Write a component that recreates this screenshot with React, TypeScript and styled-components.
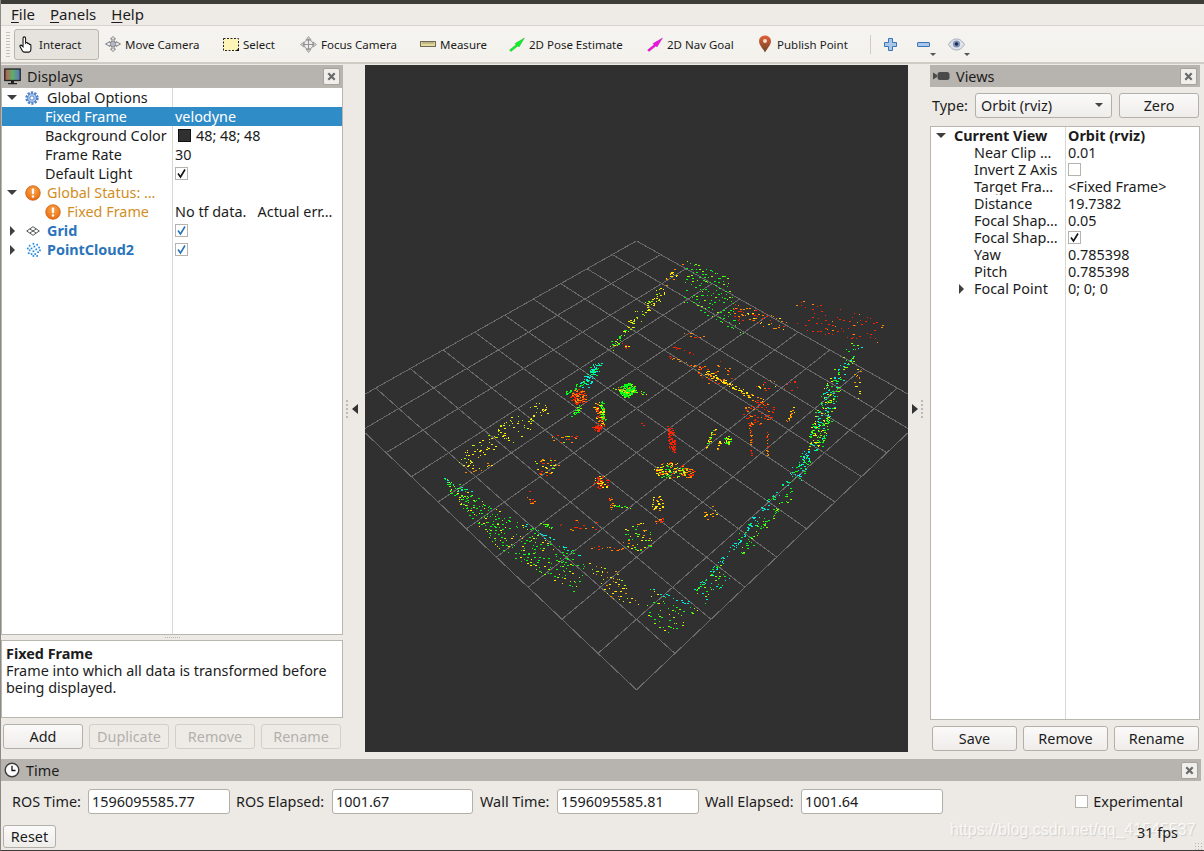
import React, { useMemo } from "react";
import styled, { createGlobalStyle } from "styled-components";

const Global = createGlobalStyle`
  html, body { margin: 0; padding: 0; background: #edeae5; }
  #root { width: 1204px; height: 851px; overflow: hidden; }
  * { box-sizing: border-box; }
`;

const Win = styled.div`
  position: relative;
  width: 1204px;
  height: 851px;
  display: flex;
  flex-direction: column;
  background: #edeae5;
  border-left: 1px solid #8d8a85;
  border-bottom: 1px solid #3c3b37;
  font-family: "Noto Sans", "Open Sans", sans-serif;
  font-size: 14.4px;
  color: #1c1c1c;
  overflow: hidden;
`;
const TopEdge = styled.div`
  height: 4px;
  flex: none;
  background: #3e3d38;
  margin-left: -1px;
`;
const MenuBar = styled.div`
  height: 22px;
  flex: none;
  display: flex;
  align-items: center;
  gap: 15px;
  padding: 0 0 2px 10px;
  background: #eeebe6;
  border-bottom: 1px solid #d9d6d1;
  font-size: 15px;
`;
const MenuItem = styled.span`
  u { text-underline-offset: 2px; }
`;
const ToolBar = styled.div`
  height: 38px;
  flex: none;
  display: flex;
  align-items: center;
  padding-left: 5px;
  background: linear-gradient(#f6f4f0, #f3f1ec);
  border-bottom: 2px solid #cfccc6;
`;
const Grip = styled.div`
  width: 4px;
  height: 26px;
  margin-right: 4px;
  background-image: radial-gradient(circle, #c4c1bb 0.7px, transparent 0.8px);
  background-size: 2px 3px;
`;
const ToolBtn = styled.div<{ $w: number; $active?: boolean }>`
  width: ${(p) => p.$w}px;
  height: 31px;
  flex: none;
  display: flex;
  align-items: center;
  gap: ${(p) => (p.$active ? 3 : 4)}px;
  padding-left: ${(p) => (p.$active ? 4 : 5)}px;
  font-size: 11.5px;
  white-space: nowrap;
  border-radius: 3px;
  ${(p) =>
    p.$active
      ? "background:#e6e3de;border:1px solid #b9b6b0;"
      : "border:1px solid transparent;"}
`;
const Sep = styled.div`
  width: 1px;
  height: 19px;
  margin: 0 13px 0 4px;
  background: #d0cdc8;
`;
const ToolIcon = styled.div<{ $w: number }>`
  position: relative;
  width: ${(p) => p.$w}px;
  height: 20px;
  flex: none;
  display: flex;
  align-items: center;
`;
const Drop = styled.span<{ $r: number }>`
  position: absolute;
  right: ${(p) => p.$r}px;
  bottom: -2px;
  width: 0;
  height: 0;
  border-left: 3px solid transparent;
  border-right: 3px solid transparent;
  border-top: 3px solid #555;
`;
const Main = styled.div`
  flex: none;
  height: 687px;
  margin-top: 1px;
  display: flex;
`;
const LeftDock = styled.div`
  width: 342px;
  flex: none;
  display: flex;
  flex-direction: column;
`;
const RightDock = styled.div`
  width: 270px;
  flex: none;
  display: flex;
  flex-direction: column;
`;
const DockHead = styled.div`
  height: 22px;
  flex: none;
  display: flex;
  align-items: center;
  gap: 6px;
  padding: 0 3px 0 3px;
  background: #b7b3ae;
`;
const DockTitle = styled.span`
  flex: 1;
`;
const CloseBtn = styled.div`
  width: 17px;
  height: 17px;
  display: flex;
  align-items: center;
  justify-content: center;
  background: #f1efec;
  border: 1px solid #a5a29c;
  border-radius: 2px;
`;
const Tree = styled.div<{ $w: number }>`
  flex: 1;
  min-height: 0;
  background: #fff;
  border: 1px solid #b9b6b0;
  background-image: linear-gradient(#d9d7d3, #d9d7d3);
  background-size: 1px 100%;
  background-repeat: no-repeat;
  background-position: ${(p) => p.$w}px 0;
`;
const Row = styled.div<{ $h: number; $sel?: boolean; $w: number }>`
  height: ${(p) => p.$h}px;
  display: grid;
  grid-template-columns: ${(p) => p.$w}px 1fr;
  align-items: center;
  white-space: nowrap;
  ${(p) => (p.$sel ? "background:#308cc6;color:#fff;" : "")}
`;
const NameCell = styled.div<{ $pad: number; $tone?: "warn" | "link"; $bold?: boolean }>`
  display: flex;
  align-items: center;
  padding-left: ${(p) => p.$pad}px;
  height: 100%;
  overflow: hidden;
  color: ${(p) => (p.$tone === "warn" ? "#d18e1f" : p.$tone === "link" ? "#2a74b9" : "inherit")};
  font-weight: ${(p) => (p.$bold || p.$tone === "link" ? 700 : 400)};
`;
const ValueCell = styled.div<{ $bold?: boolean }>`
  display: flex;
  align-items: center;
  padding-left: 3px;
  height: 100%;
  overflow: hidden;
  font-weight: ${(p) => (p.$bold ? 700 : 400)};
`;
const Arrow = styled.span<{ $open?: boolean }>`
  flex: none;
  width: 0;
  height: 0;
  ${(p) =>
    p.$open
      ? "border-left:5px solid transparent;border-right:5px solid transparent;border-top:5px solid #3f3f3f;"
      : "border-top:5px solid transparent;border-bottom:5px solid transparent;border-left:5px solid #3f3f3f;"}
`;
const IconSlot = styled.span<{ $l: number; $w: number }>`
  flex: none;
  display: flex;
  margin-left: ${(p) => p.$l}px;
  width: ${(p) => p.$w}px;
`;
const Check = styled.span`
  width: 13px;
  height: 13px;
  flex: none;
  border: 1px solid #b5b3ae;
  background: #fff;
  display: flex;
  align-items: center;
  justify-content: center;
`;
const Swatch = styled.span`
  width: 13px;
  height: 13px;
  margin: 0 5px 0 3px;
  background: #303030;
  border: 1px solid #111;
`;
const SplitH = styled.div`
  height: 5px;
  flex: none;
  display: flex;
  justify-content: center;
  align-items: center;
  gap: 1px;
  i { width: 1px; height: 1px; background: #b8b5af; }
`;
const Desc = styled.div`
  height: 78px;
  flex: none;
  background: #fff;
  border: 1px solid #b9b6b0;
  padding: 4px 4px;
  line-height: 17px;
  b { display: block; font-weight: 700; }
`;
const BtnRow = styled.div<{ $pad: string; $gap: number; $top: number }>`
  display: flex;
  gap: ${(p) => p.$gap}px;
  padding: ${(p) => p.$pad};
  margin-top: ${(p) => p.$top}px;
`;
const Btn = styled.div<{ $w: number; $h: number; $off?: boolean }>`
  width: ${(p) => p.$w}px;
  height: ${(p) => p.$h}px;
  flex: none;
  display: flex;
  align-items: center;
  justify-content: center;
  border-radius: 3px;
  border: 1px solid ${(p) => (p.$off ? "#d2cfca" : "#b3b0aa")};
  color: ${(p) => (p.$off ? "#b2b0ac" : "inherit")};
  background: ${(p) => (p.$off ? "#eeebe7" : "linear-gradient(#fbfafa, #efedea)")};
`;
const Split = styled.div`
  width: 22px;
  flex: none;
  display: flex;
  align-items: center;
`;
const SplitDots = styled.div`
  width: 2px;
  height: 20px;
  margin-left: 3px;
  background-image: radial-gradient(circle, #bdbab4 0.8px, transparent 0.9px);
  background-size: 2px 4px;
`;
const SplitArrow = styled.span<{ $dir: "l" | "r" }>`
  width: 0;
  height: 0;
  margin-left: 4px;
  border-top: 5px solid transparent;
  border-bottom: 5px solid transparent;
  ${(p) => (p.$dir === "l" ? "border-right:6px solid #333;" : "border-left:6px solid #333;")}
`;
const Canvas = styled.div`
  width: 543px;
  flex: none;
  height: 687px;
  background: #303030;
  overflow: hidden;
  svg { display: block; }
`;
const TypeRow = styled.div`
  height: 39px;
  flex: none;
  display: flex;
  align-items: center;
  padding: 0 1px 3px 2px;
`;
const TypeLabel = styled.span`
  width: 43px;
  flex: none;
`;
const Combo = styled.div`
  width: 137px;
  height: 25px;
  display: flex;
  align-items: center;
  justify-content: space-between;
  padding: 0 8px 0 5px;
  border: 1px solid #b3b0aa;
  border-radius: 3px;
  background: linear-gradient(#fbfafa, #efedea);
  margin-right: 7px;
  span:last-child {
    width: 0;
    height: 0;
    border-left: 4px solid transparent;
    border-right: 4px solid transparent;
    border-top: 4px solid #444;
  }
`;
const TimeDock = styled.div`
  margin-top: 7px;
  flex: 1;
  display: flex;
  flex-direction: column;
`;
const TimeHead = styled(DockHead)`
  margin-right: 3px;
`;
const TimeRow = styled.div`
  height: 40px;
  flex: none;
  display: flex;
  align-items: center;
  padding-left: 11px;
`;
const TimeLabel = styled.span<{ $w: number; $l?: number }>`
  width: ${(p) => p.$w}px;
  margin-left: ${(p) => p.$l || 0}px;
  flex: none;
  white-space: nowrap;
`;
const TimeInput = styled.div<{ $w: number }>`
  width: ${(p) => p.$w}px;
  height: 25px;
  flex: none;
  display: flex;
  align-items: center;
  padding-left: 3px;
  background: #fff;
  border: 1px solid #b3b0aa;
  border-radius: 3px;
`;
const Spacer = styled.div`
  flex: 1;
`;
const Experimental = styled.div`
  display: flex;
  align-items: center;
  gap: 5px;
  padding-right: 21px;
`;
const BottomRow = styled.div`
  display: flex;
  align-items: center;
  height: 23px;
  margin-top: 4px;
  padding-left: 2px;
`;
const Fps = styled.span`
  position: relative;
  z-index: 1;
  margin-right: 26px;
  margin-bottom: 9px;
`;
const Watermark = styled.div`
  position: absolute;
  left: 949px;
  top: 821px;
  font-family: "Liberation Sans", Arial, sans-serif;
  font-size: 16px;
  color: rgba(255, 255, 255, 0.8);
  white-space: nowrap;
  text-shadow: 1px 1px 1px rgba(170, 170, 170, 0.45);
`;
const SizeGrip = styled.div`
  position: absolute;
  right: 1px;
  bottom: 0;
  width: 9px;
  height: 8px;
  background-image: radial-gradient(circle, #b5b2ac 0.7px, transparent 0.8px);
  background-size: 3px 3px;
`;

/* ---------- icons ---------- */
const HandIcon = () => (
  <svg width="17" height="17" viewBox="0 0 16 16">
    <path
      d="M5 .8c.8 0 1.2.5 1.2 1.2V6.600l.3-.4c.8-.3 1.4 0 1.5.6l.1.3c.7-.4 1.4-.2 1.5.6l.1.3c.7-.3 1.5 0 1.5.8V12c0 1.800-1 3.200-2.500 3.200H5c-1 0-1.600-.8-2-1.600L1 10c-.4-.7 0-1.400.7-1.400.6 0 1 .4 1.500 1l.6.6V2C3.800 1.300 4.300.8 5 .8z"
      fill="#fff"
      stroke="#111"
      strokeWidth="1"
    />
  </svg>
);
const MoveIcon = () => (
  <svg width="16" height="16" viewBox="0 0 16 16">
    <path
      d="M8 .5 10.500 3H9v2.200L11 7V5.500L15.500 8 11 10.500V9L9 10.800V13h1.500L8 15.500 5.500 13H7v-2.200L5 9v1.500L.5 8 5 5.500V7l2-1.800V3H5.500z"
      fill="#e8e8ea"
      stroke="#77777a"
      strokeWidth=".9"
    />
    <circle cx="8" cy="8" r="2.600" fill="#b4bac4" stroke="#77777a" strokeWidth=".6" />
  </svg>
);
const SelectIcon = () => (
  <svg width="16" height="16" viewBox="0 0 16 16">
    <rect x=".5" y="2.500" width="15" height="12" fill="#fdf5b6" stroke="#222" strokeWidth="1" strokeDasharray="2 1.500" />
    <path d="M12.500 15H16v-3z" fill="#111" />
  </svg>
);
const FocusIcon = () => (
  <svg width="17" height="17" viewBox="0 0 17 17">
    <path d="M8.500.5 11 3.800H6zM8.500 16.500 6 13.200h5zM.5 8.500 3.800 6v5zM16.500 8.500 13.200 11V6z" fill="#cfcfcf" stroke="#8a8a8a" strokeWidth=".7" />
    <circle cx="8.500" cy="8.500" r="4.600" fill="#ececec" stroke="#8c8c8c" />
    <path d="M8.500 3v11M3 8.500h11" stroke="#8c8c8c" strokeWidth=".9" />
  </svg>
);
const RulerIcon = () => (
  <svg width="16" height="16" viewBox="0 0 16 16">
    <rect x=".5" y="5.500" width="15" height="5" fill="#e3d99a" stroke="#6f6a55" />
    <path d="M3 6v1.800M5 6v1.800M7 6v1.800M9 6v1.800M11 6v1.800M13 6v1.800" stroke="#6f6a55" strokeWidth=".7" />
  </svg>
);
const ArrowIcon = ({ c, d }: { c: string; d: string }) => (
  <svg width="16" height="16" viewBox="0 0 16 16">
    <path d="M.5 14 7 8.700 6 7.500 15.500 2 10 11 8.900 10 2 15.500z" fill={c} stroke={d} strokeWidth=".3" />
  </svg>
);
const PinIcon = () => (
  <svg width="16" height="18" viewBox="-1 0 16 18">
    <defs>
      <linearGradient id="pinG" x1="0" y1="0" x2="0" y2="1">
        <stop offset="0" stopColor="#e4603a" />
        <stop offset="1" stopColor="#6b4423" />
      </linearGradient>
    </defs>
    <path d="M7 .5C3.400.5 1 3 1 6.200 1 10 5 13.500 7 17.500c2-4 6-7.500 6-11.300C13 3 10.600.5 7 .5z" fill="url(#pinG)" />
    <circle cx="7" cy="6" r="2" fill="#f3e2c8" />
  </svg>
);
const PlusIcon = () => (
  <svg width="13" height="13" viewBox="0 0 13 13">
    <path d="M4.500.5h4v4h4v4h-4v4h-4v-4h-4v-4h4z" fill="#a8c6ea" stroke="#3d74b6" />
  </svg>
);
const MinusIcon = () => (
  <svg width="13" height="13" viewBox="0 0 13 13">
    <rect x=".5" y="4.500" width="12" height="4" rx=".5" fill="#a8c6ea" stroke="#3d74b6" />
  </svg>
);
const EyeIcon = () => (
  <svg width="17" height="13" viewBox="0 0 17 13">
    <path d="M.5 6.500C3 2.500 5.500 1 8.500 1s5.500 1.500 8 5.500c-2.500 4-5 5.500-8 5.500S3 10.500.5 6.500z" fill="#dfe3ea" stroke="#a4aab5" />
    <circle cx="8.500" cy="6" r="3.600" fill="#7d8fb8" />
    <circle cx="8.500" cy="6" r="1.700" fill="#1f2a4a" />
  </svg>
);
const MonitorIcon = () => (
  <svg width="17" height="17" viewBox="0 0 17 17">
    <defs>
      <linearGradient id="scr" x1="0" y1="0" x2="1" y2="0">
        <stop offset="0" stopColor="#c2564f" />
        <stop offset=".5" stopColor="#5fae66" />
        <stop offset="1" stopColor="#5a74c4" />
      </linearGradient>
    </defs>
    <rect x=".8" y="1" width="15.400" height="11.500" fill="url(#scr)" stroke="#222" strokeWidth="1.300" />
    <path d="M7 12.500h3V15H7zM4 15h9v1.200H4z" fill="#222" />
  </svg>
);
const GearIcon = () => (
  <svg width="14" height="14" viewBox="0 0 14 14">
    <circle cx="7" cy="7" r="5" fill="none" stroke="#4f81c7" strokeWidth="3.400" strokeDasharray="2 1.140" />
    <circle cx="7" cy="7" r="4.400" fill="#a9c6ea" stroke="#4f81c7" strokeWidth=".8" />
    <circle cx="7" cy="7" r="2" fill="#fff" stroke="#4f81c7" strokeWidth=".8" />
  </svg>
);
const WarnIcon = () => (
  <svg width="16" height="16" viewBox="0 0 16 16">
    <defs>
      <radialGradient id="wg" cx=".5" cy=".35" r=".7">
        <stop offset="0" stopColor="#f9a74a" />
        <stop offset="1" stopColor="#e8670c" />
      </radialGradient>
    </defs>
    <circle cx="8" cy="8" r="7.300" fill="url(#wg)" stroke="#c9590c" strokeWidth=".7" />
    <rect x="6.900" y="3.500" width="2.200" height="5.800" rx=".8" fill="#fff" />
    <circle cx="8" cy="11.500" r="1.200" fill="#fff" />
  </svg>
);
const GridIcon = () => (
  <svg width="14" height="10" viewBox="0 0 14 10">
    <path d="M7 .7 13.300 5 7 9.300.7 5zM3.800 2.900 10.200 7.100M10.200 2.900 3.800 7.100" fill="none" stroke="#555" strokeWidth="1" />
  </svg>
);
const CloudIcon = () => (
  <svg width="15" height="15" viewBox="0 0 16 16" fill="#1f8ae6">
    {[[7,1],[11,2],[3,3],[8,4],[13,5],[1,6],[5,6],[10,7],[14,8],[3,8],[7,9],[12,10],[2,11],[5,12],[9,12],[7,14],[11,14]].map(([x, y], i) => (
      <rect key={i} x={x} y={y} width="1.800" height="1.800" />
    ))}
  </svg>
);
const CamIcon = () => (
  <svg width="17" height="12" viewBox="0 0 17 12">
    <path d="M0 2.500 4 5V7L0 9.500z" fill="#4a4a4a" />
    <rect x="4.500" y="2" width="12" height="8" rx="2.500" fill="#4a4a4a" />
  </svg>
);
const ClockIcon = () => (
  <svg width="16" height="16" viewBox="0 0 16 16">
    <circle cx="8" cy="8" r="6.800" fill="#fff" stroke="#3e3e3e" strokeWidth="1.400" />
    <path d="M8 3.800V8.500H11.500" fill="none" stroke="#111" strokeWidth="1.300" />
  </svg>
);
const XIcon = () => (
  <svg width="9" height="9" viewBox="0 0 9 9">
    <path d="M1.300 1.300 7.700 7.700M7.700 1.300 1.300 7.700" stroke="#6a6a6a" strokeWidth="2.200" />
  </svg>
);
const Tick = ({ c = "#111" }: { c?: string }) => (
  <svg width="11" height="11" viewBox="0 0 11 11">
    <path d="M2 5.500 4.500 9 9 1.500" fill="none" stroke={c} strokeWidth="1.600" />
  </svg>
);

/* ---------- 3D view ---------- */
const CX = 636.5, CY = 408.5, D = 19.7382, F = 829.3, P = 0.785398;
const project = (x: number, y: number): [number, number] => {
  const t = (x + y) / Math.SQRT2;
  const s = (x - y) / Math.SQRT2;
  const depth = D - t * Math.cos(P);
  return [CX + (F * s) / depth, CY + (F * t * Math.sin(P)) / depth];
};

const R = "#ff2200", O = "#ff8a00", Y = "#ffee00", L = "#8cff00", G = "#00ff14", C = "#00eedd";
type Pt = [number, number];
type Quad = { q: [Pt, Pt, Pt, Pt]; r: number; c: number; k: number; col: string[] };
type Seg = { a: Pt; b: Pt; w: number; n: number; col: string[] };
type Blob = { o: Pt; rx: number; ry: number; n: number; col: string[] };

const quads: Quad[] = [
  { q: [[687, 260], [728, 277], [683, 303], [745, 338]], r: 12, c: 16, k: 0.7, col: [G, G, G, L] },
  { q: [[733, 303], [787, 320], [733, 320], [782, 332]], r: 6, c: 18, k: 0.65, col: [O, O, R, Y] },
  { q: [[793, 298], [885, 320], [797, 332], [877, 345]], r: 7, c: 22, k: 0.52, col: [R, R, R, O] },
  { q: [[443, 477], [520, 523], [450, 493], [497, 550]], r: 10, c: 24, k: 0.62, col: [G, G, L, Y, G] },
  { q: [[520, 523], [587, 567], [497, 550], [573, 593]], r: 10, c: 22, k: 0.62, col: [G, G, G, L, Y] },
  { q: [[587, 563], [617, 570], [610, 600], [640, 607]], r: 8, c: 10, k: 0.7, col: [Y, Y, Y, O, L] },
  { q: [[648, 588], [700, 610], [645, 623], [670, 637]], r: 7, c: 12, k: 0.65, col: [G, G, L, Y] },
  { q: [[695, 590], [720, 563], [705, 605], [732, 578]], r: 5, c: 12, k: 0.65, col: [G, L, C] },
];
const segs: Seg[] = [
  { a: [598, 365], b: [583, 385], w: 4, n: 90, col: [C, C, G] },
  { a: [583, 382], b: [565, 394], w: 1.5, n: 24, col: [G] },
  { a: [580, 405], b: [572, 416], w: 2, n: 24, col: [G, L] },
  { a: [613, 388], b: [645, 393], w: 2, n: 40, col: [L, Y, O, G] },
  { a: [601, 402], b: [603, 424], w: 2, n: 60, col: [G, G, L, Y, O] },
  { a: [595, 405], b: [600, 420], w: 2.5, n: 35, col: [R, O, Y] },
  { a: [463, 460], b: [547, 407], w: 9, n: 110, col: [Y, Y, Y, L] },
  { a: [610, 348], b: [630, 325], w: 3, n: 30, col: [L, G, Y] },
  { a: [630, 325], b: [662, 292], w: 5, n: 55, col: [Y, Y, L] },
  { a: [663, 285], b: [682, 263], w: 4, n: 18, col: [Y, O] },
  { a: [620, 343], b: [628, 348], w: 2, n: 8, col: [Y, R] },
  { a: [682, 333], b: [703, 338], w: 2, n: 10, col: [R, O] },
  { a: [673, 347], b: [698, 355], w: 1, n: 12, col: [R] },
  { a: [670, 357], b: [700, 368], w: 1.5, n: 16, col: [R, O] },
  { a: [705, 372], b: [740, 390], w: 2, n: 70, col: [Y, Y, O] },
  { a: [740, 390], b: [762, 402], w: 3, n: 22, col: [O, Y] },
  { a: [750, 415], b: [751, 455], w: 1, n: 26, col: [R, O] },
  { a: [767, 430], b: [767, 457], w: 1, n: 18, col: [R, O] },
  { a: [795, 407], b: [786, 423], w: 2.5, n: 16, col: [O, Y] },
  { a: [858, 343], b: [835, 382], w: 6, n: 40, col: [G, C, L] },
  { a: [835, 382], b: [812, 447], w: 8, n: 220, col: [G, L, C, G, Y] },
  { a: [812, 447], b: [795, 478], w: 5, n: 70, col: [C, G, C] },
  { a: [797, 467], b: [720, 563], w: 3, n: 90, col: [C, C, G] },
  { a: [720, 563], b: [695, 590], w: 3, n: 30, col: [C, G] },
  { a: [790, 490], b: [740, 555], w: 5, n: 60, col: [G, G, L] },
  { a: [443, 477], b: [470, 495], w: 3, n: 18, col: [C, G] },
  { a: [525, 525], b: [578, 556], w: 2, n: 32, col: [C, C, G] },
  { a: [648, 588], b: [695, 606], w: 2, n: 14, col: [C] },
  { a: [670, 427], b: [672, 450], w: 3, n: 90, col: [R] },
  { a: [707, 447], b: [713, 428], w: 2, n: 30, col: [O, G, L, Y] },
  { a: [716, 449], b: [720, 441], w: 1, n: 10, col: [Y, O] },
  { a: [610, 497], b: [611, 509], w: 1.5, n: 16, col: [R, O] },
  { a: [612, 505], b: [632, 507], w: 1, n: 12, col: [G, L] },
  { a: [540, 522], b: [553, 528], w: 1, n: 12, col: [L, G] },
  { a: [463, 473], b: [493, 463], w: 3, n: 12, col: [O, Y] },
  { a: [528, 490], b: [532, 504], w: 3, n: 10, col: [R, O] },
  { a: [590, 546], b: [625, 550], w: 2, n: 16, col: [R, O] },
  { a: [858, 370], b: [856, 398], w: 4, n: 16, col: [Y, O] },
];
const blobs: Blob[] = [
  { o: [578, 397], rx: 8, ry: 8, n: 110, col: [R, R, O] },
  { o: [627, 390], rx: 8, ry: 7, n: 180, col: [G, G, L] },
  { o: [597, 428], rx: 5, ry: 3, n: 40, col: [R] },
  { o: [601, 423], rx: 4, ry: 5, n: 16, col: [R, O] },
  { o: [727, 440], rx: 4, ry: 4, n: 30, col: [G, L, Y] },
  { o: [670, 470], rx: 17, ry: 8, n: 130, col: [Y, L, R, G, O] },
  { o: [688, 472], rx: 6, ry: 6, n: 30, col: [R, O] },
  { o: [600, 482], rx: 9, ry: 7, n: 55, col: [R, R, Y] },
  { o: [657, 503], rx: 6, ry: 8, n: 28, col: [Y, Y, O] },
  { o: [659, 520], rx: 4, ry: 4, n: 12, col: [R, O] },
  { o: [638, 537], rx: 16, ry: 15, n: 50, col: [Y, L, O, G] },
  { o: [545, 466], rx: 13, ry: 9, n: 36, col: [O, Y, L, R] },
  { o: [710, 513], rx: 7, ry: 7, n: 16, col: [Y, O] },
  { o: [563, 438], rx: 14, ry: 5, n: 18, col: [R, O, L] },
  { o: [758, 412], rx: 16, ry: 14, n: 60, col: [R, R, O] },
  { o: [715, 372], rx: 20, ry: 12, n: 36, col: [R, O] },
  { o: [765, 385], rx: 12, ry: 6, n: 14, col: [R, O, Y] },
  { o: [790, 385], rx: 8, ry: 6, n: 8, col: [R] },
  { o: [580, 525], rx: 20, ry: 6, n: 16, col: [R, O] },
  { o: [640, 425], rx: 3, ry: 3, n: 2, col: [R] },
];

function buildCloud() {
  let seed = 271828;
  const rnd = () => {
    seed = (seed * 1664525 + 1013904223) >>> 0;
    return seed / 4294967296;
  };
  const paths: Record<string, string> = {};
  const dot = (x: number, y: number, col: string[], big = 0.5) => {
    const c = col[Math.floor(rnd() * col.length)];
    const w = rnd() < big ? 2 : 1;
    paths[c] = (paths[c] || "") + `M${Math.round(x)} ${Math.round(y)}h${w}v1h-${w}z`;
  };
  quads.forEach(({ q, r, c, k, col }) => {
    for (let i = 0; i < r; i++) {
      for (let j = 0; j < c; j++) {
        if (rnd() > k) continue;
        const u = (j + rnd() * 0.9) / c, v = (i + rnd() * 0.5) / r;
        const x = (1 - v) * ((1 - u) * q[0][0] + u * q[1][0]) + v * ((1 - u) * q[2][0] + u * q[3][0]);
        const y = (1 - v) * ((1 - u) * q[0][1] + u * q[1][1]) + v * ((1 - u) * q[2][1] + u * q[3][1]);
        dot(x, y, col);
      }
    }
  });
  segs.forEach(({ a, b, w, n, col }) => {
    for (let i = 0; i < n; i++) {
      const t = rnd();
      dot(a[0] + (b[0] - a[0]) * t + (rnd() - 0.5) * 2 * w, a[1] + (b[1] - a[1]) * t + (rnd() - 0.5) * 2 * w, col);
    }
  });
  blobs.forEach(({ o, rx, ry, n, col }) => {
    for (let i = 0; i < n; i++) {
      const ang = rnd() * Math.PI * 2, m = Math.sqrt(rnd());
      dot(o[0] + Math.cos(ang) * m * rx, o[1] + Math.sin(ang) * m * ry, col, 0.7);
    }
  });
  return paths;
}

const View3D = () => {
  const lines = useMemo(() => {
    const out: [Pt, Pt][] = [];
    for (let i = -5; i <= 5; i++) {
      out.push([project(i, -5), project(i, 5)]);
      out.push([project(-5, i), project(5, i)]);
    }
    return out;
  }, []);
  const cloud = useMemo(buildCloud, []);
  return (
    <svg width="543" height="687" viewBox="365 65 543 687">
      <g stroke="#6a6a6b" strokeWidth="1" shapeRendering="crispEdges">
        {lines.map(([a, b], i) => (
          <line key={i} x1={a[0]} y1={a[1]} x2={b[0]} y2={b[1]} />
        ))}
      </g>
      <g shapeRendering="crispEdges">
        {Object.entries(cloud).map(([c, d]) => (
          <path key={c} d={d} fill={c} />
        ))}
      </g>
    </svg>
  );
};

/* ---------- data ---------- */
const L_W = 170;
const R_W = 134;
const viewRows: [string, React.ReactNode][] = [
  ["Near Clip …", "0.01"],
  ["Invert Z Axis", <Check key="c" />],
  ["Target Fra…", "<Fixed Frame>"],
  ["Distance", "19.7382"],
  ["Focal Shap…", "0.05"],
  ["Focal Shap…", <Check key="d"><Tick /></Check>],
  ["Yaw", "0.785398"],
  ["Pitch", "0.785398"],
];

const tools: { w: number; icon: React.ReactNode; label: string }[] = [
  { w: 118, icon: <MoveIcon />, label: "Move Camera" },
  { w: 77, icon: <SelectIcon />, label: "Select" },
  { w: 120, icon: <FocusIcon />, label: "Focus Camera" },
  { w: 89, icon: <RulerIcon />, label: "Measure" },
  { w: 138, icon: <ArrowIcon c="#12f02a" d="#0a8a1a" />, label: "2D Pose Estimate" },
  { w: 110, icon: <ArrowIcon c="#f012e0" d="#8a0a80" />, label: "2D Nav Goal" },
  { w: 115, icon: <PinIcon />, label: "Publish Point" },
];

export default function App() {
  return (
    <Win>
      <Global />
      <TopEdge />
      <MenuBar>
        <MenuItem><u>F</u>ile</MenuItem>
        <MenuItem><u>P</u>anels</MenuItem>
        <MenuItem><u>H</u>elp</MenuItem>
      </MenuBar>
      <ToolBar>
        <Grip />
        <ToolBtn $w={85} $active>
          <HandIcon />
          <span>Interact</span>
        </ToolBtn>
        {tools.map((t) => (
          <ToolBtn key={t.label} $w={t.w}>
            {t.icon}
            <span>{t.label}</span>
          </ToolBtn>
        ))}
        <Sep />
        <ToolIcon $w={33}><PlusIcon /></ToolIcon>
        <ToolIcon $w={31}>
          <MinusIcon />
          <Drop $r={12} />
        </ToolIcon>
        <ToolIcon $w={24}>
          <EyeIcon />
          <Drop $r={2} />
        </ToolIcon>
      </ToolBar>
      <Main>
        <LeftDock>
          <DockHead>
            <MonitorIcon />
            <DockTitle>Displays</DockTitle>
            <CloseBtn><XIcon /></CloseBtn>
          </DockHead>
          <Tree $w={L_W}>
            <Row $h={19} $w={L_W}>
              <NameCell $pad={5}><Arrow $open /><IconSlot $l={8} $w={22}><GearIcon /></IconSlot>Global Options</NameCell>
              <ValueCell />
            </Row>
            <Row $h={19} $w={L_W} $sel>
              <NameCell $pad={43}>Fixed Frame</NameCell>
              <ValueCell>velodyne</ValueCell>
            </Row>
            <Row $h={19} $w={L_W}>
              <NameCell $pad={43}>Background Color</NameCell>
              <ValueCell><Swatch />48; 48; 48</ValueCell>
            </Row>
            <Row $h={19} $w={L_W}>
              <NameCell $pad={43}>Frame Rate</NameCell>
              <ValueCell>30</ValueCell>
            </Row>
            <Row $h={19} $w={L_W}>
              <NameCell $pad={43}>Default Light</NameCell>
              <ValueCell><Check><Tick /></Check></ValueCell>
            </Row>
            <Row $h={19} $w={L_W}>
              <NameCell $pad={5} $tone="warn"><Arrow $open /><IconSlot $l={8} $w={22}><WarnIcon /></IconSlot>Global Status: …</NameCell>
              <ValueCell />
            </Row>
            <Row $h={19} $w={L_W}>
              <NameCell $pad={43} $tone="warn"><IconSlot $l={0} $w={22}><WarnIcon /></IconSlot>Fixed Frame</NameCell>
              <ValueCell>No tf data.&nbsp;&nbsp; Actual err…</ValueCell>
            </Row>
            <Row $h={19} $w={L_W}>
              <NameCell $pad={8} $tone="link"><Arrow /><IconSlot $l={11} $w={21}><GridIcon /></IconSlot>Grid</NameCell>
              <ValueCell><Check><Tick c="#2a74b9" /></Check></ValueCell>
            </Row>
            <Row $h={19} $w={L_W}>
              <NameCell $pad={8} $tone="link"><Arrow /><IconSlot $l={11} $w={21}><CloudIcon /></IconSlot>PointCloud2</NameCell>
              <ValueCell><Check><Tick c="#2a74b9" /></Check></ValueCell>
            </Row>
          </Tree>
          <SplitH><i /><i /><i /><i /><i /><i /><i /><i /></SplitH>
          <Desc>
            <b>Fixed Frame</b>
            Frame into which all data is transformed before being displayed.
          </Desc>
          <BtnRow $pad="0 2px 3px" $gap={6} $top={6}>
            <Btn $w={80} $h={25}>Add</Btn>
            <Btn $w={80} $h={25} $off>Duplicate</Btn>
            <Btn $w={80} $h={25} $off>Remove</Btn>
            <Btn $w={80} $h={25} $off>Rename</Btn>
          </BtnRow>
        </LeftDock>
        <Split><SplitDots /><SplitArrow $dir="l" /></Split>
        <Canvas><View3D /></Canvas>
        <Split><SplitArrow $dir="r" /><SplitDots /></Split>
        <RightDock>
          <DockHead>
            <CamIcon />
            <DockTitle>Views</DockTitle>
            <CloseBtn><XIcon /></CloseBtn>
          </DockHead>
          <TypeRow>
            <TypeLabel>Type:</TypeLabel>
            <Combo><span>Orbit (rviz)</span><span /></Combo>
            <Btn $w={80} $h={25}>Zero</Btn>
          </TypeRow>
          <Tree $w={R_W}>
            <Row $h={17} $w={R_W}>
              <NameCell $pad={5} $bold><Arrow $open /><IconSlot $l={8} $w={0} />Current View</NameCell>
              <ValueCell $bold>Orbit (rviz)</ValueCell>
            </Row>
            {viewRows.map(([n, v], i) => (
              <Row key={i} $h={17} $w={R_W}>
                <NameCell $pad={43}>{n}</NameCell>
                <ValueCell>{v}</ValueCell>
              </Row>
            ))}
            <Row $h={17} $w={R_W}>
              <NameCell $pad={28}><Arrow /><IconSlot $l={10} $w={0} />Focal Point</NameCell>
              <ValueCell>0; 0; 0</ValueCell>
            </Row>
          </Tree>
          <BtnRow $pad="0 0 1px 2px" $gap={6} $top={6}>
            <Btn $w={85} $h={25}>Save</Btn>
            <Btn $w={85} $h={25}>Remove</Btn>
            <Btn $w={85} $h={25}>Rename</Btn>
          </BtnRow>
        </RightDock>
      </Main>
      <TimeDock>
        <TimeHead>
          <ClockIcon />
          <DockTitle>Time</DockTitle>
          <CloseBtn><XIcon /></CloseBtn>
        </TimeHead>
        <TimeRow>
          <TimeLabel $w={76}>ROS Time:</TimeLabel>
          <TimeInput $w={142}>1596095585.77</TimeInput>
          <TimeLabel $w={96} $l={6}>ROS Elapsed:</TimeLabel>
          <TimeInput $w={141}>1001.67</TimeInput>
          <TimeLabel $w={77} $l={7}>Wall Time:</TimeLabel>
          <TimeInput $w={142}>1596095585.81</TimeInput>
          <TimeLabel $w={96} $l={6}>Wall Elapsed:</TimeLabel>
          <TimeInput $w={142}>1001.64</TimeInput>
          <Spacer />
          <Experimental><Check />Experimental</Experimental>
        </TimeRow>
        <BottomRow>
          <Btn $w={53} $h={23}>Reset</Btn>
          <Spacer />
          <Fps>31 fps</Fps>
        </BottomRow>
      </TimeDock>
      <Watermark>https://blog.csdn.net/qq_41545537</Watermark>
      <SizeGrip />
    </Win>
  );
}
